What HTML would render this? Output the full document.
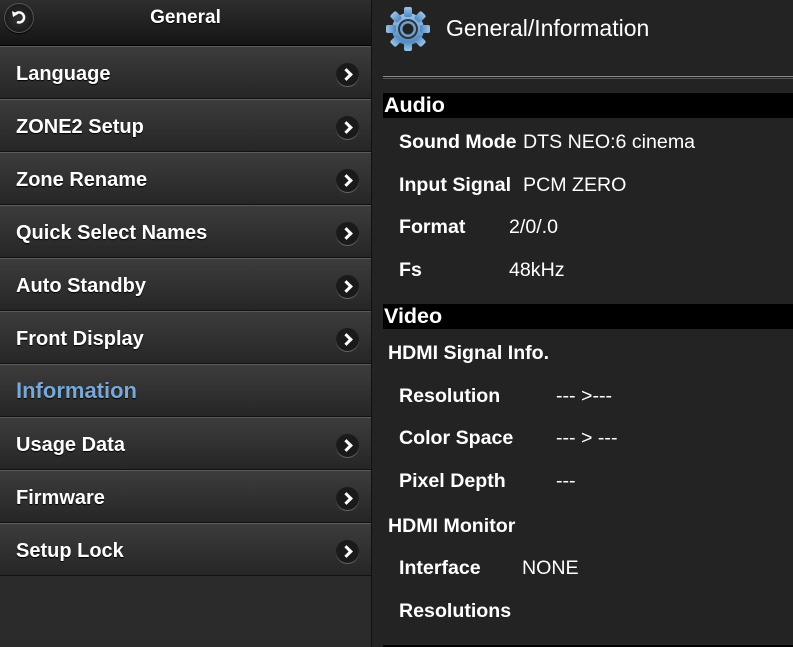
<!DOCTYPE html>
<html><head><meta charset="utf-8"><style>
*{margin:0;padding:0;box-sizing:border-box}
body{width:793px;height:647px;background:#232323;font-family:"Liberation Sans",Arial,sans-serif;position:relative;overflow:hidden;color:#fff}
.left{position:absolute;left:0;top:0;width:372px;height:647px;background:#2a2a2a;border-right:1px solid #111}
.hdr{position:absolute;left:0;top:0;width:371px;height:46px;background:linear-gradient(#2e2e2e,#151515);border-bottom:1px solid #000}
.hdr .t{position:absolute;left:0;width:371px;top:7px;text-align:center;font-weight:bold;font-size:19px;text-shadow:0 1px 1px #000}
.back{position:absolute;left:4px;top:3px;width:30px;height:30px;border-radius:50%;background:radial-gradient(#333,#111);border:1px solid #555;box-shadow:0 1px 1px #000}
.row{position:absolute;left:0;width:371px;height:53px;background:linear-gradient(#3c3c3c,#262626);border-top:1px solid #5a5a5a;border-bottom:1px solid #111}
.row span{position:absolute;left:16px;top:16px;font-weight:bold;font-size:20px;text-shadow:0 1px 1px #000}
.row.sel span{color:#79a8d8;font-size:22px;top:13px}
.arr{position:absolute;left:336px;top:16px;width:23px;height:23px;border-radius:50%;background:#1a1a1a;box-shadow:0 1px 0 #666}
.arr:after{content:"";position:absolute;left:6px;top:7px;width:6px;height:6px;border-right:3px solid #fff;border-top:3px solid #fff;transform:rotate(45deg)}
.r{position:absolute;font-size:19.6px;white-space:nowrap}
.b{font-weight:bold}
.bar{position:absolute;left:383px;width:410px;background:#000;font-weight:bold;font-size:21.5px;padding-left:1px;line-height:25px}
</style></head><body>
<div class="left">
<div class="hdr"><div class="back"><svg width="28" height="28" viewBox="0 0 28 28"><path d="M10 10.5 A5 5 0 1 1 12 18" stroke="#fff" stroke-width="2.5" fill="none"/><path d="M7 7 L8 13 L13 10 Z" fill="#fff"/></svg></div><div class="t">General</div></div>
<div class="row" style="top:46px"><span>Language</span><div class="arr"></div></div>
<div class="row" style="top:99px"><span>ZONE2 Setup</span><div class="arr"></div></div>
<div class="row" style="top:152px"><span>Zone Rename</span><div class="arr"></div></div>
<div class="row" style="top:205px"><span>Quick Select Names</span><div class="arr"></div></div>
<div class="row" style="top:258px"><span>Auto Standby</span><div class="arr"></div></div>
<div class="row" style="top:311px"><span>Front Display</span><div class="arr"></div></div>
<div class="row sel" style="top:364px"><span>Information</span></div>
<div class="row" style="top:417px"><span>Usage Data</span><div class="arr"></div></div>
<div class="row" style="top:470px"><span>Firmware</span><div class="arr"></div></div>
<div class="row" style="top:523px"><span>Setup Lock</span><div class="arr"></div></div>
</div>
<svg style="position:absolute;left:385px;top:6px" width="46" height="46" viewBox="0 0 46 46">
<defs><linearGradient id="g" x1="0" y1="0" x2="0" y2="1"><stop offset="0" stop-color="#9cc4e8"/><stop offset="1" stop-color="#4f86bd"/></linearGradient></defs>
<g fill="url(#g)"><circle cx="23" cy="23" r="16"/>
<g id="t"><rect x="19" y="1" width="8" height="10" rx="2"/></g>
<use href="#t" transform="rotate(45 23 23)"/><use href="#t" transform="rotate(90 23 23)"/><use href="#t" transform="rotate(135 23 23)"/><use href="#t" transform="rotate(180 23 23)"/><use href="#t" transform="rotate(225 23 23)"/><use href="#t" transform="rotate(270 23 23)"/><use href="#t" transform="rotate(315 23 23)"/></g>
<circle cx="23" cy="23" r="10" fill="#2a3440"/><circle cx="23" cy="23" r="8" fill="#6f9fcc"/><circle cx="23" cy="23" r="5.5" fill="#232323"/>
</svg>
<div class="r" style="left:446px;top:15px;font-size:23px">General/Information</div>
<div style="position:absolute;left:383px;top:76px;width:410px;height:3px;border-top:1px solid #888;border-bottom:1px solid #555"></div>
<div class="bar" style="top:93px">Audio</div>
<div class="r b" style="left:399px;top:131px">Sound Mode</div><div class="r" style="left:523px;top:131px">DTS NEO:6 cinema</div>
<div class="r b" style="left:399px;top:174px">Input Signal</div><div class="r" style="left:523px;top:174px">PCM ZERO</div>
<div class="r b" style="left:399px;top:216px">Format</div><div class="r" style="left:509px;top:216px">2/0/.0</div>
<div class="r b" style="left:399px;top:259px">Fs</div><div class="r" style="left:509px;top:259px">48kHz</div>
<div class="bar" style="top:304px">Video</div>
<div class="r b" style="left:388px;top:342px">HDMI Signal Info.</div>
<div class="r b" style="left:399px;top:385px">Resolution</div><div class="r" style="left:556px;top:385px">--- &gt;---</div>
<div class="r b" style="left:399px;top:427px">Color Space</div><div class="r" style="left:556px;top:427px">--- &gt; ---</div>
<div class="r b" style="left:399px;top:470px">Pixel Depth</div><div class="r" style="left:556px;top:470px">---</div>
<div class="r b" style="left:388px;top:515px">HDMI Monitor</div>
<div class="r b" style="left:399px;top:557px">Interface</div><div class="r" style="left:522px;top:557px">NONE</div>
<div class="r b" style="left:399px;top:600px">Resolutions</div>
<div style="position:absolute;left:383px;top:645px;width:410px;height:2px;background:#000"></div>
</body></html>
